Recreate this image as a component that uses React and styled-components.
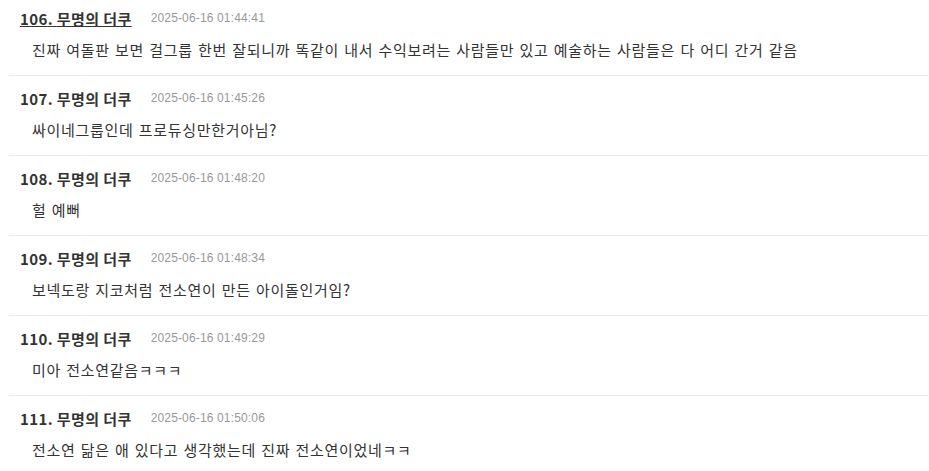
import styled, { createGlobalStyle } from "styled-components"

const GlobalStyle = createGlobalStyle`
  body {
    margin: 0;
    background: #fff;
    font-family: "Malgun Gothic", "Noto Sans CJK KR", "Liberation Sans", sans-serif;
  }
`

const COMMENTS = [
  { no: 106, name: '무명의 더쿠', date: '2025-06-16 01:44:41', text: '진짜 여돌판 보면 걸그룹 한번 잘되니까 똑같이 내서 수익보려는 사람들만 있고 예술하는 사람들은 다 어디 간거 같음', hover: true },
  { no: 107, name: '무명의 더쿠', date: '2025-06-16 01:45:26', text: '싸이네그룹인데 프로듀싱만한거아님?' },
  { no: 108, name: '무명의 더쿠', date: '2025-06-16 01:48:20', text: '헐 예뻐' },
  { no: 109, name: '무명의 더쿠', date: '2025-06-16 01:48:34', text: '보넥도랑 지코처럼 전소연이 만든 아이돌인거임?' },
  { no: 110, name: '무명의 더쿠', date: '2025-06-16 01:49:29', text: '미아 전소연같음ㅋㅋㅋ' },
  { no: 111, name: '무명의 더쿠', date: '2025-06-16 01:50:06', text: '전소연 닮은 애 있다고 생각했는데 진짜 전소연이었네ㅋㅋ' },
]

const App = () => {
  return (
    <>
      <GlobalStyle />
      <List>
        {COMMENTS.map(c => (
          <Item key={c.no}>
            <Meta>
              <Author $hover={c.hover}>{c.no}. {c.name}</Author>
              <Date>{c.date}</Date>
            </Meta>
            <Body>{c.text}</Body>
          </Item>
        ))}
      </List>
    </>
  )
}

const List = styled.ul`
  list-style: none;
  margin: 0 1px 0 9px;
  padding: 0;
`

const Item = styled.li`
  padding: 12px 0 15px;
  border-bottom: 1px solid #ebebeb;
  &:first-child {
    padding-top: 8px;
  }
`

const Meta = styled.div`
  display: flex;
  align-items: center;
  gap: 19px;
  padding-left: 11px;
  height: 20px;
`

const Author = styled.span`
  font-size: 15px;
  font-weight: bold;
  letter-spacing: 0.4px;
  color: #333;
  text-decoration: ${p => (p.$hover ? 'underline' : 'none')};
`

const Date = styled.span`
  font-size: 12px;
  letter-spacing: 0.15px;
  color: #999;
  font-family: "Liberation Sans", "Noto Sans CJK KR", sans-serif;
`

const Body = styled.p`
  margin: 12px 0 0;
  padding-left: 23px;
  font-size: 15px;
  line-height: 20px;
  letter-spacing: 0.7px;
  word-spacing: 1.2px;
  color: #333;
`

export default App
